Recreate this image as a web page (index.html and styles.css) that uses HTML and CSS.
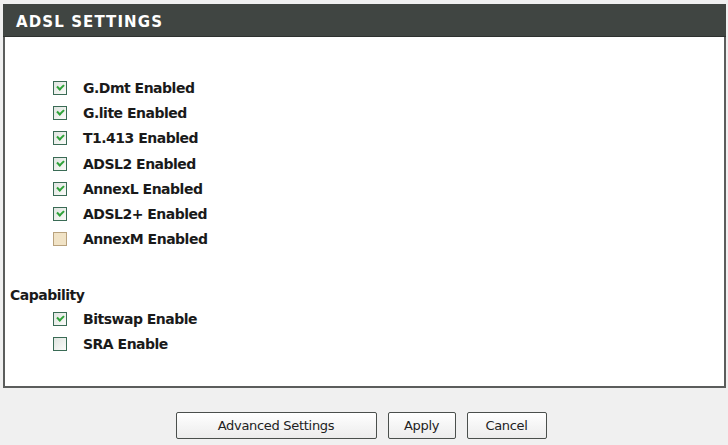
FILE: index.html
```html
<!DOCTYPE html>
<html lang="en">

<head>
    <meta charset="UTF-8">
    <title>ADSL Settings</title>
    <link rel="stylesheet" href="styles.css">
</head>

<body>
    <div class="box">
        <h2 class="box-title">ADSL SETTINGS</h2>

        <div class="box-body">
            <ul class="modes">
                <li><span class="check on"></span>G.Dmt Enabled</li>
                <li><span class="check on"></span>G.lite Enabled</li>
                <li><span class="check on"></span>T1.413 Enabled</li>
                <li><span class="check on"></span>ADSL2 Enabled</li>
                <li><span class="check on"></span>AnnexL Enabled</li>
                <li><span class="check on"></span>ADSL2+ Enabled</li>
                <li><span class="check tan"></span>AnnexM Enabled</li>
            </ul>

            <div class="cap-title">Capability</div>
            <ul class="modes caps">
                <li><span class="check on"></span>Bitswap Enable</li>
                <li><span class="check"></span>SRA Enable</li>
            </ul>
        </div>
    </div>

    <div class="buttons">
        <button class="btn wide">Advanced Settings</button>
        <button class="btn">Apply</button>
        <button class="btn cancel">Cancel</button>
    </div>
</body>

</html>
```

FILE: styles.css
```css
* {
    margin: 0;
    padding: 0;
    box-sizing: border-box;
}

ul,
li {
    list-style: none;
}

body {
    background-color: #f0f0f0;
    font-family: "DejaVu Sans", Tahoma, sans-serif;
    color: #1a1a1a;
    padding: 4px 2px 0 3px;
}

.box {
    border: 2px solid #5b5d5c;
    border-top: none;
    background-color: #fff;
    height: 384px;
}

.box-title {
    height: 33px;
    background-color: #404542;
    border-bottom: 1px solid #2e312f;
    color: #fff;
    font-size: 15px;
    font-weight: bold;
    letter-spacing: 1.1px;
    padding: 11px 0 0 13px;
    line-height: 15px;
    margin: 0 -2px;
}

.box-body {
    padding: 38px 0 0 5px;
}

.modes {
    padding-left: 43px;
}

.modes li {
    height: 25.3px;
    display: flex;
    align-items: center;
    font-size: 14px;
    font-weight: bold;
    letter-spacing: -0.5px;
}

.check {
    width: 14px;
    height: 14px;
    border: 1px solid #3a6b55;
    background: linear-gradient(135deg, #dfe4e0, #fbfbf9);
    margin-right: 16px;
    position: relative;
}

.check.on::after {
    content: "";
    position: absolute;
    left: 3px;
    top: 2px;
    width: 5px;
    height: 3px;
    border-left: 2px solid #2fa33a;
    border-bottom: 2px solid #2fa33a;
    transform: rotate(-45deg);
}

.check.tan {
    border-color: #b9a27d;
    background: #f1e3c6;
}

.cap-title {
    margin-top: 35px;
    font-size: 14px;
    font-weight: bold;
    letter-spacing: -0.5px;
    height: 19px;
}

.caps li {
    height: 25px;
}

.buttons {
    display: flex;
    justify-content: center;
    gap: 11px;
    padding: 24px 0 0 0;
    margin-left: -7px;
}

.btn {
    width: 68px;
    height: 27px;
    border: 1px solid #4a4f4c;
    border-radius: 2px;
    background: linear-gradient(#ffffff, #ececec);
    font-family: "DejaVu Sans", Tahoma, sans-serif;
    font-size: 13px;
    letter-spacing: -0.3px;
    color: #222;
}

.btn.wide {
    width: 201px;
}

.btn.cancel {
    width: 80px;
}
```
